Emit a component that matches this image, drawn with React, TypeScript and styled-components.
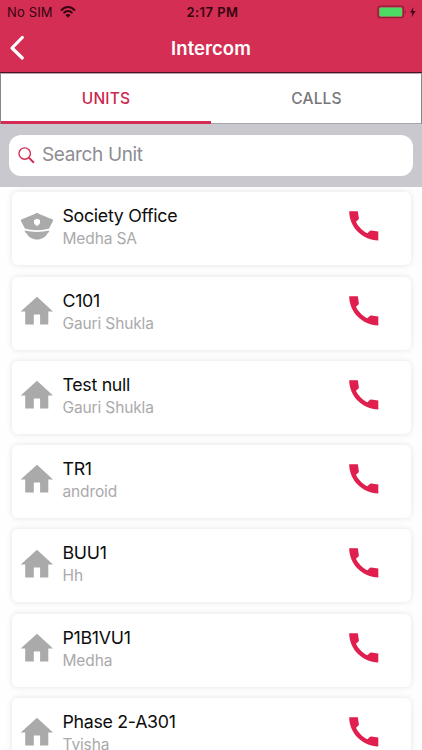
import React from "react";
import styled, { createGlobalStyle } from "styled-components";

const GlobalStyle = createGlobalStyle`
  * { box-sizing: border-box; }
  body {
    margin: 0;
    overflow: hidden;
    background: #fff;
    font-family: Inter, "Liberation Sans", sans-serif;
  }
`;

const Screen = styled.main`
  display: flex;
  flex-direction: column;
  width: 422px;
  height: 750px;
  overflow: hidden;
  background: #fefefe;
`;

const Header = styled.header`
  height: 73px;
  background: #d42e54;
  border-bottom: 1px solid #4d1426;
`;

const StatusBar = styled.div`
  display: grid;
  grid-template-columns: 1fr auto 1fr;
  align-items: center;
  height: 24px;
  padding: 0 5px 0 7px;
  color: #35040f;
  font-size: 13px;
  line-height: 24px;
`;

const Carrier = styled.div`
  display: flex;
  align-items: center;
  gap: 7px;
  letter-spacing: 0.14px;
`;

const Clock = styled.div`
  font-weight: 600;
  letter-spacing: 0.45px;
  padding-left: 1px;
`;

const Power = styled.div`
  display: flex;
  align-items: center;
  justify-content: flex-end;
`;

const NavBar = styled.div`
  display: grid;
  grid-template-columns: 40px 1fr 40px;
  align-items: center;
  height: 48px;
`;

const BackButton = styled.button`
  display: flex;
  padding: 0 0 0 9px;
  border: 0;
  background: none;
`;

const Title = styled.h1`
  margin: 0;
  color: #fff;
  font-size: 18.5px;
  font-weight: 600;
  line-height: 24px;
  letter-spacing: 0.05px;
  text-align: center;
`;

const Tabs = styled.nav`
  display: grid;
  grid-template-columns: 1fr 1fr;
  flex: none;
  height: 51px;
  border: 1px solid #88878a;
  border-top-color: #b5a5ab;
  border-bottom: 0;
  background: #fff;
`;

const Tab = styled.button<{ $active?: boolean }>`
  padding: ${(p) => (p.$active ? "4px 0 1px" : "2px 0 1px 1px")};
  border: 0;
  border-bottom: ${(p) => (p.$active ? "3px solid #d32d53" : "1px solid #a7a6aa")};
  background: none;
  color: ${(p) => (p.$active ? "#cb2850" : "#77777a")};
  font: 550 15.5px/22px Inter, sans-serif;
  letter-spacing: 0.15px;
`;

const SearchArea = styled.div`
  flex: none;
  height: 63px;
  padding: 11px 9px 12px;
  background: #c9c8cf;
`;

const SearchBox = styled.label`
  display: flex;
  align-items: center;
  gap: 7px;
  height: 41px;
  padding-left: 9px;
  border-radius: 12px;
  background: #fff;
`;

const SearchInput = styled.input`
  flex: 1;
  min-width: 0;
  padding: 0 0 2px;
  border: 0;
  outline: 0;
  background: none;
  font: 400 19px/24px Inter, sans-serif;
  letter-spacing: -0.35px;
  &::placeholder { color: #8d8d92; opacity: 1; }
`;

const UnitList = styled.ul`
  display: flex;
  flex-direction: column;
  gap: 11.25px;
  margin: 0;
  padding: 5.3px 11px 0 12px;
  list-style: none;
`;

const Card = styled.li`
  display: grid;
  grid-template-columns: 34px 1fr 34.3px;
  align-items: center;
  flex: none;
  height: 73px;
  padding: 0 28px 0 8px;
  border-radius: 6px;
  background: #fff;
  box-shadow: 0 0 6px rgba(0, 0, 0, 0.11);
`;

const UnitIcon = styled.svg`
  width: 34px;
  height: 30px;
  margin-top: -4.5px;
  fill: #aaa;
`;

const UnitText = styled.div`
  padding-left: 8.5px;
  padding-bottom: 3px;
`;

const UnitName = styled.div`
  color: #0d0d0d;
  font-size: 17.8px;
  line-height: 23px;
  letter-spacing: -0.3px;
`;

const Resident = styled.div`
  color: #aaaaab;
  font-size: 15.5px;
  line-height: 23px;
  letter-spacing: -0.13px;
`;

const CallButton = styled.button`
  display: flex;
  padding: 0;
  margin-top: -5px;
  border: 0;
  background: none;
`;

const WifiIcon = () => (
  <svg width="16" height="12" viewBox="0 0 16 12" fill="none" stroke="#35040f" strokeWidth="2">
    <path d="M1 4.600C5-.1 11-.1 15 4.600M3.600 7.200c2.500-2.800 6.300-2.800 8.800 0" />
    <path d="M5.500 9.200c1.500-1.600 3.500-1.600 5 0L8 11.700z" fill="#35040f" stroke="none" />
  </svg>
);

const BatteryIcon = () => (
  <svg width="40" height="14" viewBox="0 0 40 14">
    <rect x=".9" y="1.2" width="25.6" height="11.5" rx="2.6" fill="#d42e54" stroke="#8e1d38" strokeWidth="1.3" />
    <rect x="2.3" y="2.5" width="22.8" height="8.9" rx="1.2" fill="#4cd964" />
    <path d="M28 5.300c1.300.5 1.300 3 0 3.500z" fill="#8e1d38" />
    <path d="M36.600 1.900 33 7.600h2.500l-1.100 4.600 4.200-6.200h-2.800z" fill="#35040f" />
  </svg>
);

const BackIcon = () => (
  <svg width="17" height="26" viewBox="0 0 17 26" fill="none" stroke="#fff" strokeWidth="3.2" strokeLinecap="round" strokeLinejoin="round">
    <path d="M13.300 2.500 3 13l10.300 10" />
  </svg>
);

const SearchIcon = () => (
  <svg width="17" height="17" viewBox="0 0 17 17" fill="none" stroke="#d52b52" strokeWidth="1.35">
    <circle cx="6.7" cy="6.5" r="5.7" />
    <path d="m10.800 10.600 5.100 5.100" strokeWidth="2" />
  </svg>
);

const HouseIcon = () => (
  <UnitIcon viewBox="0 0 34 30">
    <path d="M17 .7 33 15.400h-4.700v13h-8.200v-10h-6.300v10H5.200v-13H.7z" />
  </UnitIcon>
);

const OfficerIcon = () => (
  <UnitIcon viewBox="0 0 34 30">
    <path d="M17 .7C21 3.100 27.200 5 32.200 7.200c1 .5 1.200 1.200.7 2l-3.800 7.300c-7 2.300-17.200 2.300-24.200 0L1.100 9.200c-.5-.8-.3-1.500.7-2C6.800 5 13 3.100 17 .7z" />
    <path d="m17 6.700 3 1.300v2.300c0 1.600-1.100 2.800-3 3.700-1.900-.9-3-2.100-3-3.700V8z" fill="#fff" />
    <path d="M4.600 18.600c7.500 1.700 17.300 1.700 24.800 0-.4 1.500-1 2.400-2 3-1.900 3.600-5.700 6-10.400 6s-8.500-2.400-10.400-6c-1-.6-1.600-1.500-2-3z" />
  </UnitIcon>
);

const PhoneIcon = () => (
  <svg width="30" height="30" viewBox="0 0 30 30" fill="#e01f4f">
    <path d="M.2.3H8.800L9.900 7.300Q10 8.200 9.200 8.800L7 10.700C9 15.200 13.800 20.200 18.500 22.300L20.700 19.900Q21.300 19.300 22.200 19.400L29.300 20.500V29.400C13.500 29.400.2 16.100.2.3z" />
  </svg>
);

const units = [
  { name: "Society Office", resident: "Medha SA", office: true },
  { name: "C101", resident: "Gauri Shukla" },
  { name: "Test null", resident: "Gauri Shukla" },
  { name: "TR1", resident: "android" },
  { name: "BUU1", resident: "Hh" },
  { name: "P1B1VU1", resident: "Medha" },
  { name: "Phase 2-A301", resident: "Tvisha" },
];

export default function App() {
  return (
    <Screen>
      <GlobalStyle />
      <Header>
        <StatusBar>
          <Carrier>No SIM <WifiIcon /></Carrier>
          <Clock>2:17 PM</Clock>
          <Power><BatteryIcon /></Power>
        </StatusBar>
        <NavBar>
          <BackButton aria-label="Back"><BackIcon /></BackButton>
          <Title>Intercom</Title>
        </NavBar>
      </Header>
      <Tabs>
        <Tab $active>UNITS</Tab>
        <Tab>CALLS</Tab>
      </Tabs>
      <SearchArea>
        <SearchBox>
          <SearchIcon />
          <SearchInput placeholder="Search Unit" />
        </SearchBox>
      </SearchArea>
      <UnitList>
        {units.map((unit) => (
          <Card key={unit.name}>
            {unit.office ? <OfficerIcon /> : <HouseIcon />}
            <UnitText>
              <UnitName>{unit.name}</UnitName>
              <Resident>{unit.resident}</Resident>
            </UnitText>
            <CallButton aria-label={`Call ${unit.name}`}><PhoneIcon /></CallButton>
          </Card>
        ))}
      </UnitList>
    </Screen>
  );
}
